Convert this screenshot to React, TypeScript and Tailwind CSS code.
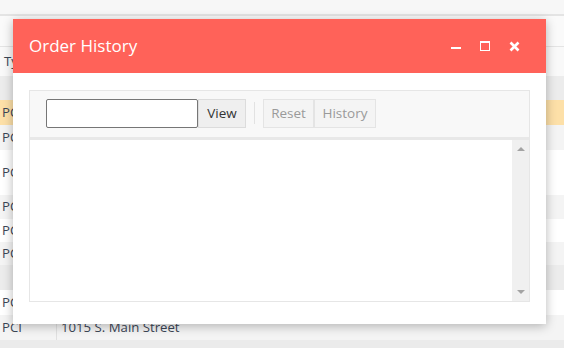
import React from 'react';

const rows = [
    { h: 'h-[24px]', bg: 'bg-[#ececec]', type: '', addr: '' },
    { h: 'h-[25px]', bg: 'bg-[#fde0a8]', type: 'PCI', addr: '' },
    { h: 'h-[25px]', bg: 'bg-[#f4f4f4]', type: 'PCI', addr: '' },
    { h: 'h-[45px]', bg: 'bg-white', type: 'PCI', addr: '' },
    { h: 'h-[24px]', bg: 'bg-[#f4f4f4]', type: 'PCI', addr: '' },
    { h: 'h-[23px]', bg: 'bg-white', type: 'PCI', addr: '' },
    { h: 'h-[23px]', bg: 'bg-[#f4f4f4]', type: 'PCI', addr: '' },
    { h: 'h-[25px]', bg: 'bg-[#ececec]', type: '', addr: '' },
    { h: 'h-[25px]', bg: 'bg-white', type: 'PCI', addr: '' },
    { h: 'h-[25px]', bg: 'bg-[#f4f4f4]', type: 'PCI', addr: '1015 S. Main Street' },
];

const App: React.FC = () => {
    return (
        <div className="relative w-[564px] h-[348px] overflow-hidden bg-[#ebebeb] font-['Open_Sans','Noto_Sans',sans-serif] text-[13.2px] text-[#3b4656]">
            {/* grid behind the dialog */}
            <div className="h-[14px] bg-[#f7f7f7]" />
            <div className="h-[2px] bg-[#e4e4e4]" />
            <div className="h-[31px] bg-[#fafafa] border-b border-[#e4e4e4]" />
            <div className="h-[29px] bg-[#f9f9f9] flex items-center pl-[4px]">Type</div>
            {rows.map((r, i) => (
                <div key={i} className={`flex items-center ${r.h} ${r.bg}`}>
                    <div className="w-[57px] pl-[2px] h-full flex items-center border-r border-[#e0e0e0]">{r.type}</div>
                    <div className="pl-[4px]">{r.addr}</div>
                </div>
            ))}

            {/* dialog */}
            <div className="absolute left-[13px] top-[19px] w-[533px] h-[305px] bg-white flex flex-col shadow-[0_2px_10px_rgba(0,0,0,0.28)]">
                <div className="h-[54px] bg-[#ff6259] flex items-center pl-[16px] pr-[26px] text-white">
                    <span className="text-[17px] leading-none pb-[1px]">Order History</span>
                    <div className="ml-auto flex items-center gap-[19px]">
                        <svg width="10" height="10" viewBox="0 0 10 10"><rect x="0" y="6" width="10" height="2" fill="#fff" /></svg>
                        <svg width="10" height="10" viewBox="0 0 10 10"><rect x="0.5" y="0.5" width="9" height="9" fill="none" stroke="#fff" /><rect x="0" y="0" width="10" height="2" fill="#fff" /></svg>
                        <svg width="11" height="11" viewBox="0 0 11 11"><path d="M1.5 1.5 L9.5 9.5 M9.5 1.5 L1.5 9.5" stroke="#fff" strokeWidth="2.6" /></svg>
                    </div>
                </div>
                <div className="flex-1 px-[16px] pt-[17px] pb-[22px] flex">
                    <div className="flex-1 border border-[#e6e6e6] flex flex-col">
                        <div className="h-[49px] bg-[#f8f8f8] border-b-[3px] border-[#e8e8e8] flex items-start pt-[8px] pl-[16px]">
                            <input className="w-[152px] h-[29px] border border-[#767676] rounded-[2px] bg-white outline-none" />
                            <button className="h-[29px] w-[48px] bg-[#efefef] border border-[#dcdcdc] text-[13.5px] text-[#333]">View</button>
                            <div className="w-px h-[22px] bg-[#e2e2e2] mt-[3px] mx-[8px]" />
                            <button className="h-[29px] w-[51px] bg-[#f4f4f4] border border-[#e4e4e4] text-[13.5px] text-[#9a9a9a]">Reset</button>
                            <button className="h-[29px] w-[62px] bg-[#f4f4f4] border border-[#e4e4e4] text-[13.5px] text-[#9a9a9a]">History</button>
                        </div>
                        <div className="flex-1 flex">
                            <div className="flex-1 bg-white" />
                            <div className="w-[17px] bg-[#f0f0f0] flex flex-col items-center justify-between py-[7px]">
                                <svg width="8" height="4" viewBox="0 0 8 4"><path d="M0 4 L4 0 L8 4 Z" fill="#a3a3a3" /></svg>
                                <svg width="8" height="4" viewBox="0 0 8 4"><path d="M0 0 L8 0 L4 4 Z" fill="#a3a3a3" /></svg>
                            </div>
                        </div>
                    </div>
                </div>
            </div>
        </div>
    );
};

export default App;
